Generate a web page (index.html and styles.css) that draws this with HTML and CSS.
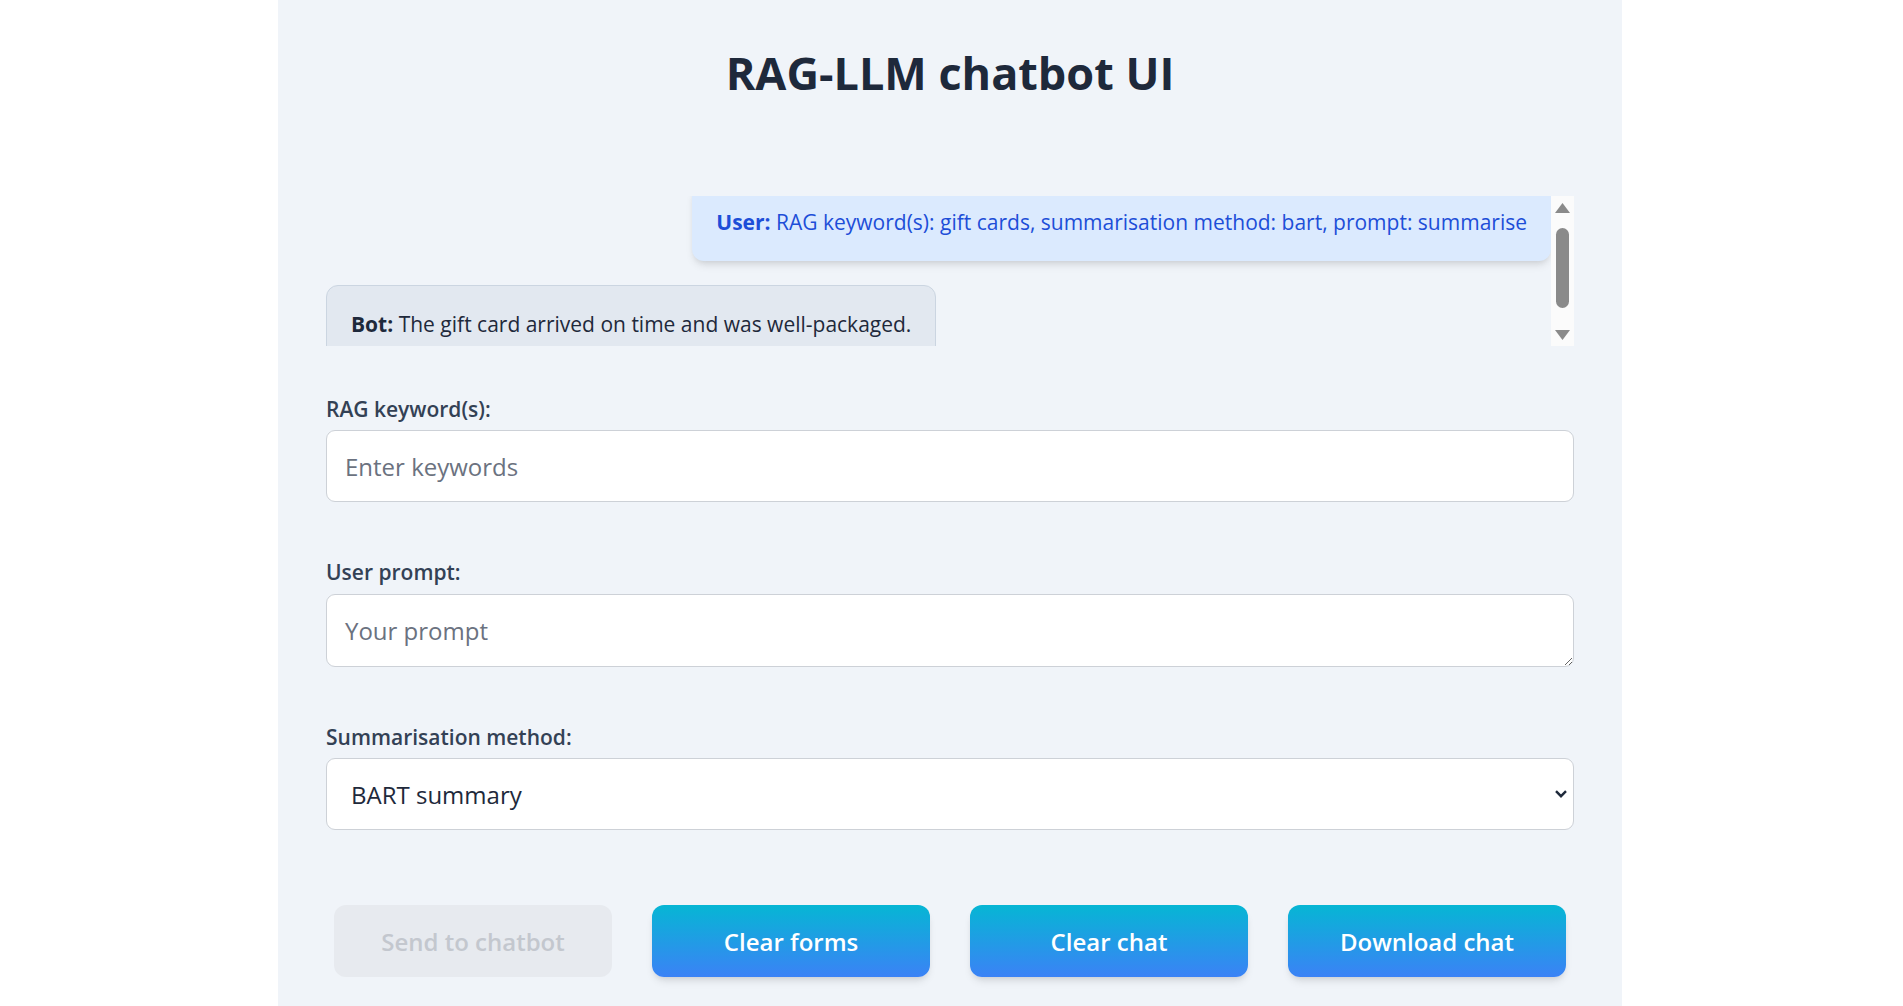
FILE: index.html
```html
<!DOCTYPE html>
<html lang="en">
<head>
<meta charset="utf-8">
<title>RAG-LLM chatbot UI</title>
<link rel="stylesheet" href="styles.css">
</head>
<body>
<main class="page">
  <h1 class="title">RAG-LLM chatbot UI</h1>

  <section class="chat">
    <div class="chat-viewport">
      <div class="messages">
        <div class="msg msg-user"><strong>User:</strong> RAG keyword(s): gift cards, summarisation method: bart, prompt: summarise</div>
        <div class="msg msg-bot"><strong>Bot:</strong> The gift card arrived on time and was well-packaged.</div>
      </div>
    </div>
    <div class="scrollbar">
      <svg class="sb-arrow" width="15" height="10" viewBox="0 0 15 10"><polygon points="7.5,0 15,10 0,10" fill="#8a8a8a"/></svg>
      <div class="sb-thumb"></div>
      <div class="sb-spacer"></div>
      <svg class="sb-arrow" width="15" height="10" viewBox="0 0 15 10"><polygon points="0,0 15,0 7.5,10" fill="#8a8a8a"/></svg>
    </div>
  </section>

  <form class="form">
    <div class="field">
      <label class="label" for="kw">RAG keyword(s):</label>
      <input class="control input" id="kw" type="text" placeholder="Enter keywords">
    </div>
    <div class="field">
      <label class="label" for="prompt">User prompt:</label>
      <textarea class="control textarea" id="prompt" rows="1" placeholder="Your prompt"></textarea>
    </div>
    <div class="field">
      <label class="label" for="method">Summarisation method:</label>
      <div class="select-wrap">
        <select class="control select" id="method">
          <option>BART summary</option>
          <option>T5 summary</option>
        </select>
        <svg class="chevron" width="12" height="8" viewBox="0 0 12 8"><polyline points="1,1.2 6,6.2 11,1.2" fill="none" stroke="#1e293b" stroke-width="2.4"/></svg>
      </div>
    </div>
  </form>

  <div class="actions">
    <button class="btn btn-disabled" type="button" disabled>Send to chatbot</button>
    <button class="btn btn-primary" type="button">Clear forms</button>
    <button class="btn btn-primary" type="button">Clear chat</button>
    <button class="btn btn-primary" type="button">Download chat</button>
  </div>
</main>
</body>
</html>
```

FILE: styles.css
```css
html, body {
  margin: 0;
  padding: 0;
  background: #ffffff;
  overflow: hidden;
}

body {
  padding-right: 3px;
  font-family: "Open Sans", "Noto Sans", sans-serif;
  color: #1e293b;
}

.page {
  box-sizing: border-box;
  width: 1344px;
  min-height: 1006px;
  margin: 0 auto;
  padding: 46px 48px 20px;
  background: #f0f4f9;
}

.title {
  margin: 0;
  font-size: 45px;
  line-height: 54px;
  font-weight: 700;
  text-align: center;
  color: #1e293b;
}

/* chat */
.chat {
  display: flex;
  height: 150px;
  margin-top: 96px;
}

.chat-viewport {
  flex: 1;
  overflow: hidden;
}

.messages {
  display: flex;
  flex-direction: column;
  gap: 24px;
  margin-top: -13.5px;
}

.msg {
  font-size: 21px;
  line-height: 31.5px;
  border-radius: 12px;
}

.msg-user {
  align-self: flex-end;
  padding: 24px 24px 23px;
  background: #dbeafe;
  color: #1d4ed8;
  box-shadow: 0 6px 9px -2px rgba(0, 0, 0, 0.1), 0 3px 6px -3px rgba(0, 0, 0, 0.1);
}

.msg-bot {
  align-self: flex-start;
  padding: 23px 24px;
  background: #e2e8f0;
  border: 1px solid #cbd5e1;
  color: #1e293b;
}

.msg strong {
  font-weight: 700;
}

.scrollbar {
  width: 23px;
  flex: none;
  display: flex;
  flex-direction: column;
  align-items: center;
  box-sizing: border-box;
  padding: 7px 0 6px;
  background: #fbfbfb;
}

.sb-arrow {
  display: block;
  flex: none;
}

.sb-thumb {
  width: 13px;
  height: 80px;
  margin-top: 15px;
  border-radius: 7px;
  background: #8a8a8a;
  flex: none;
}

.sb-spacer {
  flex: 1;
}

/* form */
.form {
  margin-top: 47.5px;
}

.field + .field {
  margin-top: 55px;
}

.label {
  display: block;
  margin-bottom: 5px;
  font-size: 21px;
  line-height: 31.5px;
  font-weight: 600;
  color: #334155;
}

.control {
  display: block;
  box-sizing: border-box;
  width: 100%;
  margin: 0;
  border: 1px solid #cdd1d7;
  border-radius: 9px;
  background: #ffffff;
  font-family: "Open Sans", "Noto Sans", sans-serif;
  font-size: 24px;
  line-height: 36px;
  color: #1e293b;
  outline: none;
}

.control::placeholder {
  color: #6b7280;
  opacity: 1;
}

.input {
  height: 72px;
  padding: 1px 18px 0;
}

.textarea {
  height: 73px;
  padding: 18px 18px 15px;
  resize: vertical;
}

.select-wrap {
  position: relative;
}

.select {
  height: 72px;
  padding: 1px 40px 0 24px;
  -webkit-appearance: none;
  appearance: none;
}

.chevron {
  position: absolute;
  right: 7px;
  top: 32px;
  pointer-events: none;
}

/* buttons */
.actions {
  display: flex;
  gap: 40px;
  padding: 0 8px;
  margin-top: 75px;
}

.btn {
  flex: 1;
  height: 72px;
  border: none;
  border-radius: 12px;
  font-family: "Open Sans", "Noto Sans", sans-serif;
  font-size: 24px;
  font-weight: 600;
  cursor: pointer;
}

.btn-primary {
  color: #ffffff;
  background: linear-gradient(to bottom, #06b6d4, #3b82f6);
  box-shadow: 0 6px 9px -2px rgba(0, 0, 0, 0.1), 0 3px 6px -3px rgba(0, 0, 0, 0.1);
}

.btn-disabled {
  color: #c3c7ce;
  background: #e7eaef;
  cursor: not-allowed;
}
```
